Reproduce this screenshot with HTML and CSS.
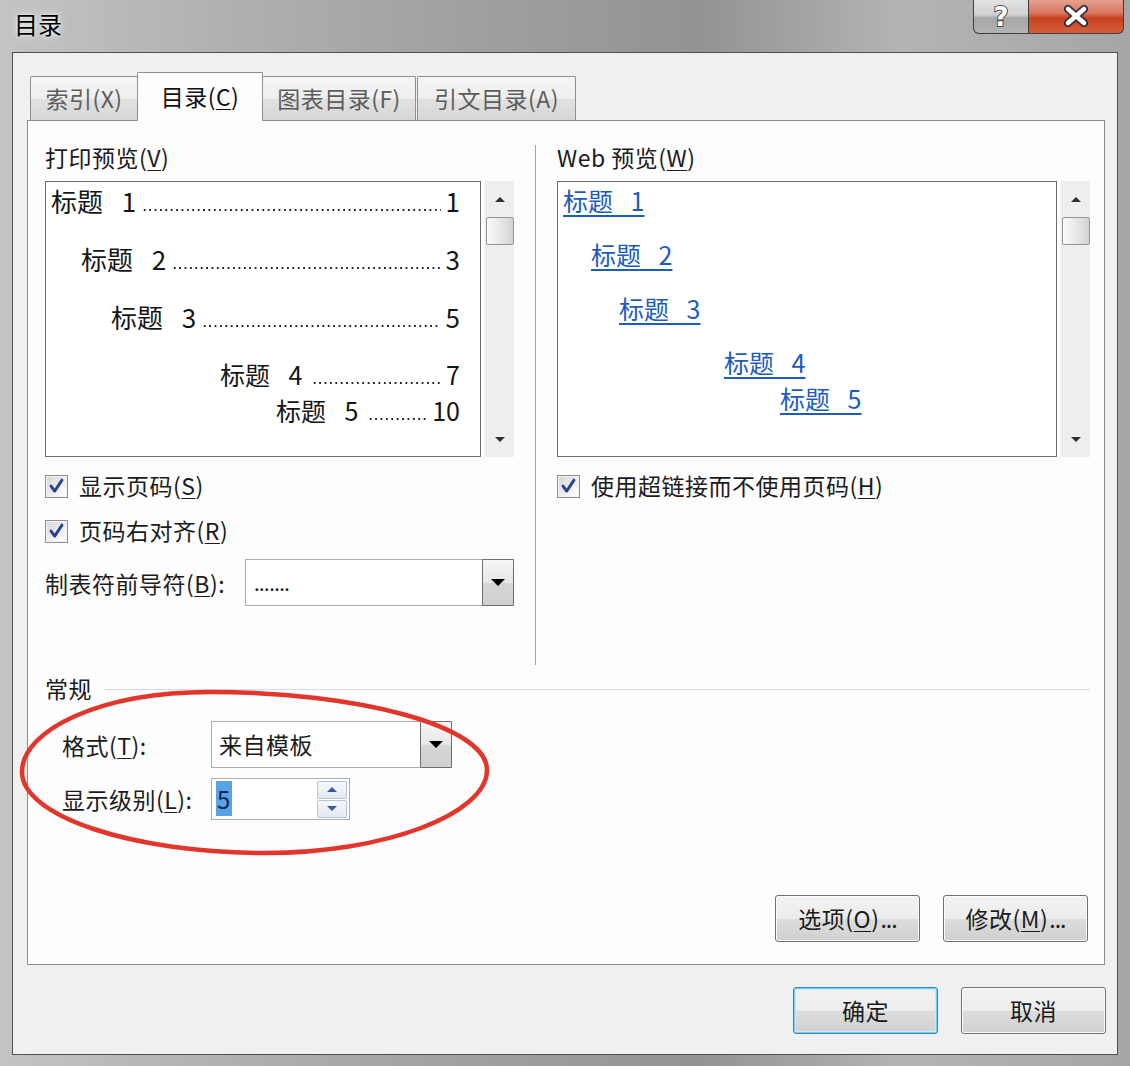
FILE: index.html
```html
<!DOCTYPE html>
<html lang="zh-CN">
<head>
<meta charset="utf-8">
<title>目录</title>
<link rel="stylesheet" href="styles.css">
</head>
<body>
<div class="window">
  <div class="titlebar">
    <div class="title">目录</div>
    <div class="caption-btns">
      <div class="cbtn help"><span>?</span></div>
      <div class="cbtn close">
        <svg class="x-icon" viewBox="0 0 26 22" width="26" height="22">
          <path class="x-out" d="M5 4 L21 18 M21 4 L5 18"/>
          <path class="x-in" d="M5 4 L21 18 M21 4 L5 18"/>
        </svg>
      </div>
    </div>
  </div>
  <div class="client">
    <div class="tabs">
      <div class="tab t-index">索引(X)</div>
      <div class="tab t-toc active">目录(<u>C</u>)</div>
      <div class="tab t-fig">图表目录(F)</div>
      <div class="tab t-cite">引文目录(A)</div>
    </div>
    <div class="panel">
      <div class="cols">
        <div class="col col-left">
          <div class="group-label">打印预览(<u>V</u>)</div>
          <div class="preview-row">
            <div class="preview print">
              <div class="toc-line l1"><span class="t">标题 1</span><span class="leader"></span><span class="pg">1</span></div>
              <div class="toc-line l2"><span class="t">标题 2</span><span class="leader"></span><span class="pg">3</span></div>
              <div class="toc-line l3"><span class="t">标题 3</span><span class="leader"></span><span class="pg">5</span></div>
              <div class="toc-line l4"><span class="t">标题 4</span><span class="leader"></span><span class="pg">7</span></div>
              <div class="toc-line l5"><span class="t">标题 5</span><span class="leader"></span><span class="pg">10</span></div>
            </div>
            <div class="scrollbar">
              <div class="sb-btn"><i class="tri-up"></i></div>
              <div class="thumb"></div>
              <div class="sb-track"></div>
              <div class="sb-btn"><i class="tri-down"></i></div>
            </div>
          </div>
          <div class="check-row first">
            <span class="cb"><svg viewBox="0 0 23 23"><path d="M5.5 11 L9.5 16.5 L17.5 4.5"/></svg></span>
            <span>显示页码(<u>S</u>)</span>
          </div>
          <div class="check-row">
            <span class="cb"><svg viewBox="0 0 23 23"><path d="M5.5 11 L9.5 16.5 L17.5 4.5"/></svg></span>
            <span>页码右对齐(<u>R</u>)</span>
          </div>
          <div class="leader-row">
            <span>制表符前导符(<u>B</u>):</span>
            <div class="combo leader-combo">
              <span class="combo-text dots">.......</span>
              <span class="combo-btn"><i class="tri-down big"></i></span>
            </div>
          </div>
        </div>
        <div class="sep"></div>
        <div class="col col-right">
          <div class="group-label">Web 预览(<u>W</u>)</div>
          <div class="preview-row">
            <div class="preview web">
              <div class="web-line w1"><a>标题 1</a></div>
              <div class="web-line w2"><a>标题 2</a></div>
              <div class="web-line w3"><a>标题 3</a></div>
              <div class="web-line w4"><a>标题 4</a></div>
              <div class="web-line w5"><a>标题 5</a></div>
            </div>
            <div class="scrollbar">
              <div class="sb-btn"><i class="tri-up"></i></div>
              <div class="thumb"></div>
              <div class="sb-track"></div>
              <div class="sb-btn"><i class="tri-down"></i></div>
            </div>
          </div>
          <div class="check-row first">
            <span class="cb"><svg viewBox="0 0 23 23"><path d="M5.5 11 L9.5 16.5 L17.5 4.5"/></svg></span>
            <span>使用超链接而不使用页码(<u>H</u>)</span>
          </div>
        </div>
      </div>
      <div class="general">
        <div class="group-head"><span>常规</span><span class="rule"></span></div>
        <div class="form-row r1">
          <span class="form-label">格式(<u>T</u>):</span>
          <div class="combo format-combo">
            <span class="combo-text">来自模板</span>
            <span class="combo-btn"><i class="tri-down big"></i></span>
          </div>
        </div>
        <div class="form-row r2">
          <span class="form-label">显示级别(<u>L</u>):</span>
          <div class="spin">
            <span class="spin-val"><span class="sel">5</span></span>
            <div class="spin-btns">
              <div class="sp"><i class="tri-up small"></i></div>
              <div class="sp"><i class="tri-down small"></i></div>
            </div>
          </div>
        </div>
      </div>
      <div class="panel-btns">
        <div class="btn">选项(<u>O</u>)<span class="ell">...</span></div>
        <div class="btn">修改(<u>M</u>)<span class="ell">...</span></div>
      </div>
      <svg class="mark" viewBox="0 0 474 170" width="474" height="170">
        <path d="M2 84 C2 42 80 4 190 4 C338 4 467 38 467 82 C467 126 365 165 245 165 C112 165 2 128 2 84 Z"/>
      </svg>
    </div>
    <div class="dialog-btns">
      <div class="btn default">确定</div>
      <div class="btn">取消</div>
    </div>
  </div>
</div>
</body>
</html>
```

FILE: styles.css
```css
* { box-sizing: border-box; }
html, body { margin: 0; padding: 0; }
body {
  width: 1130px;
  height: 1066px;
  overflow: hidden;
  font-family: "Noto Sans CJK SC", "Noto Sans", sans-serif;
  color: #1b1b1b;
}
u { text-decoration: underline; text-underline-offset: 3px; text-decoration-thickness: 1px; }

.window {
  width: 1130px;
  height: 1066px;
  display: flex;
  flex-direction: column;
  background: linear-gradient(90deg, #c4c4c4 0%, #b2b2b2 18%, #a1a1a1 40%, #939393 62%, #b4b4b4 80%, #a6a6a6 100%);
}

/* title bar */
.titlebar {
  height: 52px;
  flex: none;
  display: flex;
  justify-content: space-between;
  align-items: flex-start;
  padding: 0 6px 0 14px;
}
.title {
  font-size: 24px;
  line-height: 30px;
  margin-top: 9px;
  color: #000;
  text-shadow: 0 0 8px rgba(255, 255, 255, 0.9), 0 0 3px rgba(255, 255, 255, 0.8);
}
.caption-btns { display: flex; height: 34px; }
.cbtn {
  height: 34px;
  border: 1px solid #3d3d3d;
  border-top: none;
  display: flex;
  align-items: center;
  justify-content: center;
}
.help {
  width: 56px;
  border-radius: 0 0 0 6px;
  background: linear-gradient(#e2e2e2 0%, #d0d0d0 45%, #a6a6a6 55%, #b4b4b4 100%);
  font-family: "DejaVu Sans", sans-serif;
  font-weight: bold;
  font-size: 26px;
  line-height: 1;
  color: #fff;
  -webkit-text-stroke: 1.6px #2e2e3e;
  paint-order: stroke fill;
}
.close {
  width: 95px;
  border-left: none;
  border-radius: 0 0 6px 0;
  background: linear-gradient(#e6a290 0%, #d9755c 40%, #c8401f 55%, #d5603c 100%);
  padding-bottom: 2px;
}
.x-icon path { fill: none; stroke-linecap: round; }
.x-out { stroke: #2e2e3e; stroke-width: 8; }
.x-in { stroke: #fff; stroke-width: 4.6; }

/* client */
.client {
  flex: 1;
  margin: 0 12px 11px 12px;
  background: #f0f0f0;
  border: 1px solid #4f4f4f;
  display: flex;
  flex-direction: column;
  padding: 19px 12px 20px 14px;
}

.tabs {
  display: flex;
  align-items: flex-end;
  height: 49px;
  margin-bottom: -1px;
  padding-left: 3px;
  position: relative;
  z-index: 1;
  flex: none;
}
.tab {
  height: 44px;
  margin-bottom: 1px;
  margin-right: 1px;
  border: 1px solid #8e8f8f;
  border-bottom: none;
  border-radius: 2px 2px 0 0;
  background: linear-gradient(#f5f5f5, #eeeeee 50%, #e2e2e2 51%, #d6d6d6);
  font-size: 23px;
  letter-spacing: 0.5px;
  line-height: 42px;
  color: #5c5c5c;
  text-align: center;
  white-space: nowrap;
}
.t-index { width: 108px; }
.t-toc { width: 126px; }
.t-fig { width: 154px; }
.t-cite { width: 159px; }
.tab.active {
  height: 49px;
  margin: 0 -1px 0 -2px;
  padding-top: 2px;
  background: #fdfdfe;
  color: #111;
  position: relative;
  z-index: 2;
}

.panel {
  flex: 1;
  background: #fdfdfe;
  border: 1px solid #898c95;
  padding: 21px 14px 22px 17px;
  display: flex;
  flex-direction: column;
  position: relative;
}

.cols { display: flex; height: 523px; flex: none; }
.col-left { width: 469px; }
.col-right { flex: 1; }
.sep { width: 1px; background: #a3a3a3; margin: 3px 21px 0 21px; }

.group-label {
  font-size: 23px;
  letter-spacing: 0.5px;
  line-height: 30px;
  height: 30px;
  margin-bottom: 9px;
  white-space: nowrap;
}

.preview-row { display: flex; height: 276px; }
.preview {
  border: 1px solid #6e6e72;
  background: #fff;
  padding: 0 20px 0 5px;
  overflow: hidden;
}
.print { width: 436px; }
.web { width: 500px; }

.toc-line {
  display: flex;
  align-items: flex-end;
  height: 36px;
  font-size: 26px;
  line-height: 36px;
  white-space: pre;
  word-spacing: 13px;
  color: #161616;
}
.leader {
  flex: 1;
  height: 4px;
  margin: 0 5px 7px 6px;
  background-image: radial-gradient(circle at center, #222 0.9px, transparent 1.4px);
  background-size: 5.4px 4px;
  background-repeat: repeat-x;
}
.l1 { margin-top: 1px; }
.l2 { margin-top: 22px; padding-left: 30px; }
.l3 { margin-top: 22px; padding-left: 60px; }
.l4 { margin-top: 21px; padding-left: 169px; font-size: 25px; }
.l5 { padding-left: 225px; font-size: 25px; }
.l4 .leader, .l5 .leader { margin-left: 10px; }

.web-line {
  height: 36px;
  font-size: 25px;
  line-height: 36px;
  white-space: pre;
  word-spacing: 12px;
}
.web-line a {
  color: #1d5cbf;
  text-decoration: underline;
  text-underline-offset: 4px;
  text-decoration-thickness: 1.5px;
}
.w1 { margin-top: 0; }
.w2 { margin-top: 18px; padding-left: 28px; }
.w3 { margin-top: 18px; padding-left: 56px; }
.w4 { margin-top: 18px; padding-left: 161px; }
.w5 { padding-left: 217px; }

/* scrollbar */
.scrollbar {
  width: 30px;
  margin-left: 3px;
  background: #eeeeee;
  border-left: 1px solid #f8f8f8;
  display: flex;
  flex-direction: column;
  align-items: center;
}
.sb-btn { height: 36px; width: 100%; display: flex; align-items: center; justify-content: center; flex: none; }
.sb-track { flex: 1; }
.thumb {
  width: 28px;
  height: 28px;
  flex: none;
  border: 1px solid #979797;
  border-radius: 2px;
  background: linear-gradient(90deg, #f8f8f8, #e8e8e8 50%, #d2d2d2);
}
.tri-up {
  width: 0; height: 0;
  border-left: 5px solid transparent;
  border-right: 5px solid transparent;
  border-bottom: 5px solid #2f2f2f;
}
.tri-down {
  width: 0; height: 0;
  border-left: 5px solid transparent;
  border-right: 5px solid transparent;
  border-top: 5px solid #2f2f2f;
}
.tri-down.big {
  border-left-width: 7px;
  border-right-width: 7px;
  border-top: 7px solid #000;
}
.tri-up.small {
  border-left-width: 5px; border-right-width: 5px;
  border-bottom: 5px solid #3c5c9c;
}
.tri-down.small {
  border-left-width: 5px; border-right-width: 5px;
  border-top: 5px solid #3c5c9c;
}

/* checkboxes */
.check-row {
  display: flex;
  align-items: center;
  gap: 11px;
  height: 23px;
  margin-top: 22px;
  font-size: 23px;
  letter-spacing: 0.5px;
  line-height: 30px;
  white-space: nowrap;
}
.check-row.first { margin-top: 18px; }
.check-row span:last-child { margin-top: -4px; }
.cb {
  width: 23px;
  height: 23px;
  flex: none;
  border: 1px solid #8e8f8f;
  background: linear-gradient(135deg, #d6d6d6, #f4f4f4 70%, #fdfdfd);
  box-shadow: inset 0 0 0 1px #f4f4f4;
  display: flex;
}
.cb svg { width: 21px; height: 21px; }
.cb path { fill: none; stroke: #27428f; stroke-width: 3.2; stroke-linecap: round; stroke-linejoin: round; }

/* combos */
.leader-row {
  display: flex;
  align-items: center;
  justify-content: space-between;
  height: 47px;
  margin-top: 16px;
  font-size: 23px;
  letter-spacing: 0.5px;
  white-space: nowrap;
}
.combo {
  display: flex;
  align-items: stretch;
  height: 47px;
  border: 1px solid #a9acb2;
  background: #fff;
  letter-spacing: 0;
}
.leader-combo { width: 269px; }
.format-combo { width: 241px; }
.combo-text {
  flex: 1;
  padding-left: 7px;
  font-size: 23px;
  letter-spacing: 0.5px;
  line-height: 45px;
}
.combo-text.dots { padding-left: 8px; font-size: 20px; letter-spacing: -0.5px; }
.combo-btn {
  width: 32px;
  margin: -1px -1px -1px 0;
  border: 1px solid #6e6e6e;
  border-radius: 1px;
  background: linear-gradient(#f6f6f6, #e6e6e6 50%, #d6d6d6 51%, #cfcfcf);
  display: flex;
  align-items: center;
  justify-content: center;
}

/* general group */
.general { margin-top: 8px; flex: none; }
.group-head {
  display: flex;
  align-items: center;
  height: 30px;
  font-size: 23px;
  letter-spacing: 0.5px;
  line-height: 30px;
}
.rule { flex: 1; height: 1px; background: #d3dce6; margin: 2px 0 0 13px; }
.form-row {
  display: flex;
  align-items: center;
  padding-left: 17px;
  font-size: 23px;
  letter-spacing: 0.5px;
  white-space: nowrap;
}
.r1 { margin-top: 18px; }
.r2 { margin-top: 10px; }
.form-label { width: 149px; }
.spin {
  width: 139px;
  height: 42px;
  border: 1px solid #abadb3;
  background: #fff;
  display: flex;
  align-items: center;
  padding-left: 4px;
}
.spin-val { font-size: 24px; line-height: 28px; }
.sel { background: #5aa2e8; color: #14284d; padding: 0 1px; }
.spin-btns {
  margin-left: auto;
  margin-right: 2px;
  width: 30px;
  display: flex;
  flex-direction: column;
  gap: 1px;
}
.sp {
  height: 18px;
  border: 1px solid #b7c2d2;
  border-radius: 2px;
  background: linear-gradient(#f6f9fc, #e1e9f3);
  display: flex;
  align-items: center;
  justify-content: center;
}

/* buttons */
.panel-btns {
  margin-top: auto;
  margin-right: 2px;
  display: flex;
  justify-content: flex-end;
  gap: 23px;
}
.dialog-btns {
  margin-top: 22px;
  margin-right: -1px;
  display: flex;
  justify-content: flex-end;
  gap: 23px;
  flex: none;
}
.btn {
  width: 145px;
  height: 47px;
  border: 1px solid #707070;
  border-radius: 3px;
  background: linear-gradient(#f3f3f3, #ececec 50%, #dddddd 51%, #d0d0d0);
  box-shadow: inset 0 0 0 1px #fbfbfb;
  font-size: 23px;
  letter-spacing: 0.5px;
  line-height: 45px;
  text-align: center;
  white-space: nowrap;
  color: #1b1b1b;
}
.ell { letter-spacing: -1px; margin-left: 1px; }
.btn.default {
  border-color: #3c82c4;
  box-shadow: inset 0 0 0 1px #6fd0f7, inset 0 0 0 2px #c6ecfb;
}

/* red annotation ellipse over the dialog */
.mark {
  position: absolute;
  left: -8px;
  top: 567px;
  overflow: visible;
  pointer-events: none;
}
.mark path { fill: none; stroke: #e2352b; stroke-width: 4.5; }
```
